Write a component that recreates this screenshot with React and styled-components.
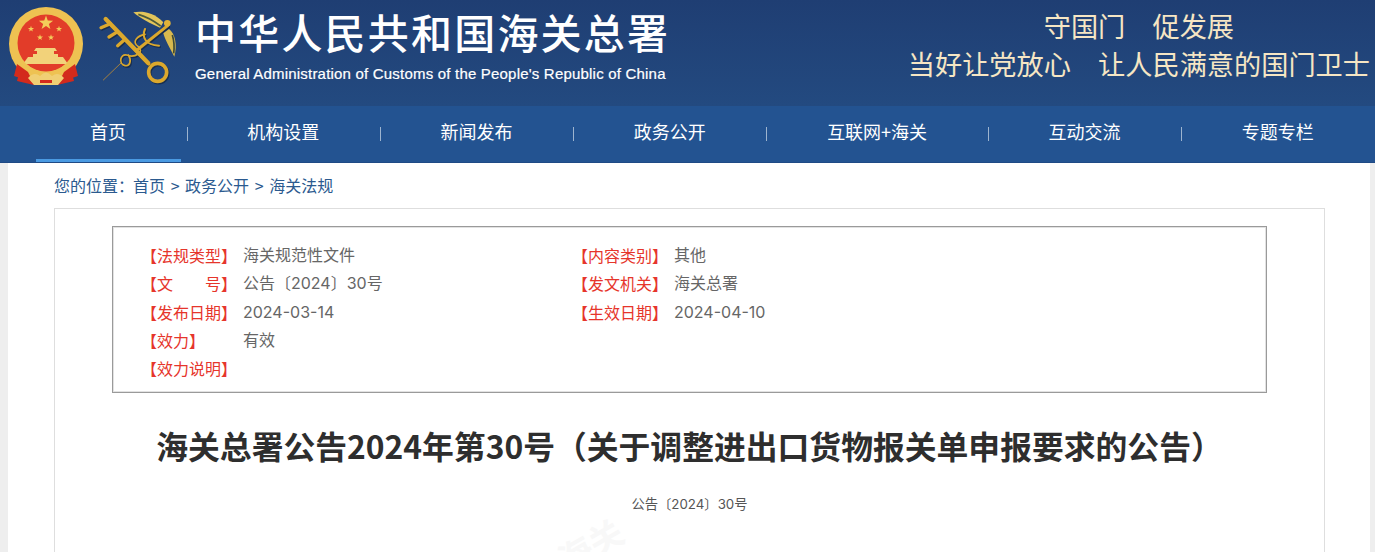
import React from "react";
import styled, { createGlobalStyle } from "styled-components";

const CJK = `"Noto Sans CJK SC", "Liberation Sans", sans-serif`;
const LATIN_CJK = `Inter, "Noto Sans CJK SC", sans-serif`;

const Global = createGlobalStyle`
  html, body { margin: 0; padding: 0; background: #eeeeee; font-family: ${CJK}; overflow: hidden; }
`;
const Page = styled.div`width: 1375px; height: 552px; overflow: hidden;`;
const Top = styled.header`
  height: 106px;
  background: linear-gradient(180deg, #1f3e73 0%, #234a80 100%);
  display: flex;
  justify-content: space-between;
`;
const Brand = styled.div`display: flex; padding: 5px 0 0 8px;`;
const Emblem = styled.svg`width: 76px; height: 80px; flex: none; margin-top: 2px;`;
const KeyMark = styled.svg`width: 85px; height: 85px; flex: none; margin-left: 11px;`;
const BrandText = styled.div`margin-left: 15px; color: #fff;`;
const BrandCn = styled.div`
  font-size: 41px; line-height: 52px; letter-spacing: 2.2px; font-weight: 500; white-space: nowrap;
`;
const BrandEn = styled.div`
  font-family: "Liberation Sans", sans-serif;
  font-size: 15px; line-height: 18px; letter-spacing: .2px; margin-top: 8px; white-space: nowrap; -webkit-text-stroke: .2px #fff;
`;
const Motto = styled.div`
  color: #f6e6c4; font-size: 27.2px; padding: 6px 5px 0 0; text-align: center; white-space: pre;
`;
const MottoLine = styled.div`line-height: 38px;`;
const Nav = styled.nav`
  height: 57px; background: #235391; display: flex; padding-left: 36px; border-bottom: 1px solid #1f4a85; box-sizing: border-box;
`;
const NavItem = styled.a`
  height: 56px; padding: 0 55px 0 54px; line-height: 51px; color: #fff; font-size: 18px; white-space: nowrap; box-sizing: border-box;
  border-bottom: 3px solid ${p => (p.$active ? "#4a9ae2" : "transparent")};
`;
const NavSep = styled.i`width: 1px; height: 14px; margin: 21px 5.65px 0; background: #9db4cf; flex: none;`;
const Sheet = styled.main`margin: 0 5px 0 8px; height: 389px; background: #fff; padding: 0 46px; position: relative; overflow: hidden;`;
const Crumb = styled.div`height: 45px; line-height: 45px; font-size: 16px; color: #2b5a8f; white-space: nowrap;`;
const CrumbHome = styled.span`margin-left: -1px;`;
const CrumbSep = styled.span`margin: 0 2px;`;
const Card = styled.section`
  width: 1271px; box-sizing: border-box; border: 1px solid #dedede; height: 400px; padding: 17px 57px 0;
`;
const Info = styled.div`
  width: 1155px; box-sizing: border-box; height: 167px; border: 1px solid #9a9a9a; box-shadow: inset 0 0 0 1px #e2e2e2; padding: 14px 28px;
  display: grid; grid-template-columns: 431px 1fr; grid-auto-rows: 28.3px;
`;
const Field = styled.div`display: flex; font-size: 16px; line-height: 28px; white-space: nowrap;`;
const Label = styled.span`width: 102px; color: #e6352b; flex: none;`;
const Value = styled.span`color: #666; font-family: ${LATIN_CJK};`;
const Title = styled.h1`
  margin: 29px 0 0; font-size: 31.8px; line-height: 46px; font-weight: 700; color: #2e2e2e; text-align: center; white-space: nowrap;
`;
const DocNo = styled.div`margin-top: 26px; font-family: ${LATIN_CJK}; font-size: 13.3px; line-height: 20px; color: #555; text-align: center;`;
const Watermark = styled.div`
  position: absolute; left: 548px; top: 357px; font-size: 34px; font-weight: 700; color: #f8f8f8; transform: rotate(-30deg); white-space: nowrap;
`;

const nav = ["首页", "机构设置", "新闻发布", "政务公开", "互联网+海关", "互动交流", "专题专栏"];
const rows = [
  [["【法规类型】", "海关规范性文件"], ["【内容类别】", "其他"]],
  [["【文\u3000\u3000号】", "公告〔2024〕30号"], ["【发文机关】", "海关总署"]],
  [["【发布日期】", "2024-03-14"], ["【生效日期】", "2024-04-10"]],
  [["【效力】", "有效"], null],
  [["【效力说明】", ""], null],
];

const Star = ({ x, y, r, fill = "#f3cc5a" }) => {
  const pts = Array.from({ length: 10 }, (_, i) => {
    const a = -Math.PI / 2 + (i * Math.PI) / 5;
    const q = i % 2 ? r * 0.4 : r;
    return `${x + q * Math.cos(a)},${y + q * Math.sin(a)}`;
  }).join(" ");
  return <polygon points={pts} fill={fill} />;
};

const KeyShapes = ({ color, thin }) => (
  <g fill="none" stroke={color} strokeLinecap="round">
    <path d="M80 172 L25 225" strokeWidth="3" stroke={thin} />
    <path d="M150 72 C140 95 150 120 192 122" strokeWidth="6" />
    <path d="M150 88 C128 92 108 110 130 125 C150 140 120 160 95 150 C75 145 70 178 90 182 C106 185 110 165 100 150" strokeWidth="5" />
    <path d="M32 42 L160 175" strokeWidth="13" />
    <path d="M46 56 L18 68 M68 80 L42 96 M90 103 L68 122" strokeWidth="10" />
    <circle cx="188" cy="202" r="27" strokeWidth="11" />
    <path d="M218 62 L130 132" strokeWidth="9" />
  </g>
);

export default function App() {
  return (
    <Page>
      <Global />
      <Top>
        <Brand>
          <Emblem viewBox="8 7 76 80">
            <path d="M22 62 L17 81 L34 85 H57 L74 81 L69 62 Z" fill="#d32a1c" />
            <circle cx="46" cy="44" r="37" fill="#eec252" />
            <circle cx="46" cy="43" r="28.5" fill="#e23c29" />
            <Star x={46} y={23} r={7.5} />
            <Star x={31} y={29} r={3.2} />
            <Star x={59} y={29} r={3.2} />
            <Star x={40} y={37.5} r={3.2} />
            <Star x={51} y={37.5} r={3.2} />
            <path d="M36 48 H55 L57 51 H54 V54 H58 V57 H33 V54 H37 V51 H34 Z" fill="#f2d27a" />
            <path d="M28 57 H63 L68 64 H23 Z" fill="#f2d27a" />
            <path d="M17 58 Q46 92 75 58" fill="none" stroke="#eec252" strokeWidth="5" />
            <path d="M17 64 L14 76 L26 80 L34 84 L28 72 Z" fill="#d32a1c" />
            <path d="M75 64 L78 76 L66 80 L58 84 L64 72 Z" fill="#d32a1c" />
            <path d="M28 78 Q34 71 40 76 Q46 69 52 76 Q58 71 64 78 L58 85 H34 Z" fill="#f0cf74" />
            <path d="M40 80 H52 V83 H40 Z" fill="#d32a1c" />
          </Emblem>
          <KeyMark viewBox="0 0 255 255">
            <g transform="translate(3 4)" opacity=".55">
              <KeyShapes color="#0f1c30" thin="transparent" />
            </g>
            <path d="M205 52 C175 20 140 18 115 22 C135 40 165 55 195 68 Z" fill="#e3c55a" />
            <path d="M130 28 C155 35 180 50 197 63" fill="none" stroke="#4c5a3a" strokeWidth="5" />
            <path d="M222 72 C240 85 248 120 238 155 C225 130 210 105 205 85 Z" fill="#d8b94e" />
            <path d="M232 90 C238 110 238 130 236 145" fill="none" stroke="#3e4a35" strokeWidth="5" />
            <KeyShapes color="#dba82d" thin="#a5803f" />
            <circle cx="217" cy="55" r="10" fill="#e1b238" />
          </KeyMark>
          <BrandText>
            <BrandCn>中华人民共和国海关总署</BrandCn>
            <BrandEn>General Administration of Customs of the People's Republic of China</BrandEn>
          </BrandText>
        </Brand>
        <Motto>
          <MottoLine>守国门{"\u3000"}促发展</MottoLine>
          <MottoLine>当好让党放心{"\u3000"}让人民满意的国门卫士</MottoLine>
        </Motto>
      </Top>
      <Nav>
        {nav.map((n, i) => (
          <React.Fragment key={n}>
            {i > 0 && <NavSep />}
            <NavItem $active={i === 0}>{n}</NavItem>
          </React.Fragment>
        ))}
      </Nav>
      <Sheet>
        <Crumb>
          您的位置：<CrumbHome>首页</CrumbHome> <CrumbSep>&gt;</CrumbSep> 政务公开 <CrumbSep>&gt;</CrumbSep> 海关法规
        </Crumb>
        <Card>
          <Info>
            {rows.flatMap((r, i) =>
              r.map((f, j) =>
                f ? (
                  <Field key={`${i}-${j}`}>
                    <Label>{f[0]}</Label>
                    <Value>{f[1]}</Value>
                  </Field>
                ) : (
                  <span key={`${i}-${j}`} />
                )
              )
            )}
          </Info>
          <Title>海关总署公告2024年第30号（关于调整进出口货物报关单申报要求的公告）</Title>
          <DocNo>公告〔2024〕30号</DocNo>
        </Card>
        <Watermark>海关</Watermark>
      </Sheet>
    </Page>
  );
}
